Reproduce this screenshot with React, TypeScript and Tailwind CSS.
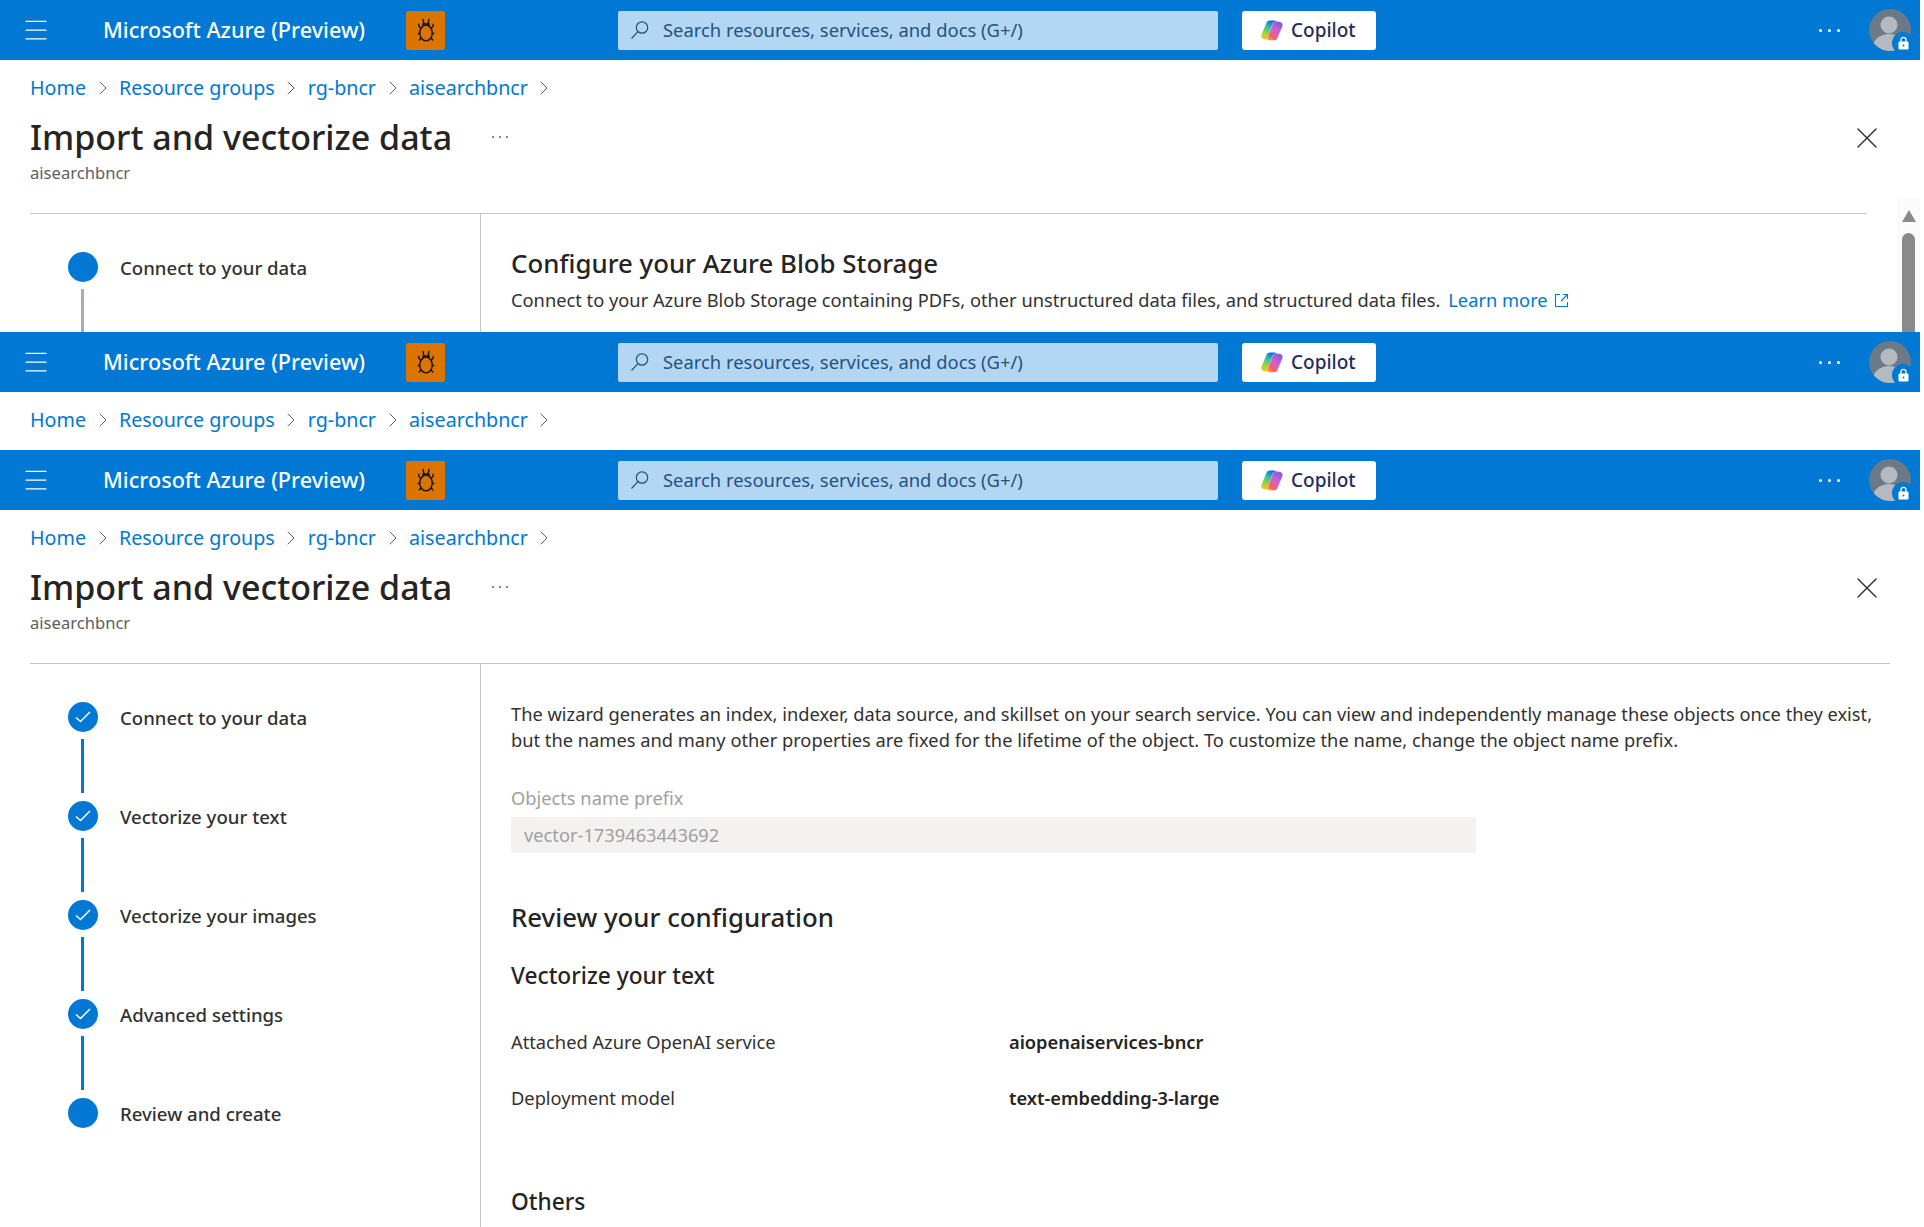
import React from 'react';
import { ChevronRight, X, Menu } from 'lucide-react';

const BREADCRUMBS = ['Home', 'Resource groups', 'rg-bncr', 'aisearchbncr'];

const BugIcon = () => (
  <svg width="22" height="24" viewBox="0 0 22 24" fill="none" stroke="#111" strokeWidth="1.3" strokeLinecap="round">
    <ellipse cx="11" cy="15" rx="6.300" ry="7.800" />
    <path d="M8 8.200V6h6v2.200" />
    <path d="M8 1.500l1 4.500M14 1.500L13 6" />
    <path d="M5.500 10L3.800 8V6.200M16.500 10l1.700-2V6.200M4.700 15.500H3.200M17.300 15.500h1.500M5.800 20L4.300 22M16.200 20l1.500 2" />
  </svg>
);

const SearchIcon = () => (
  <svg width="20" height="20" viewBox="0 0 20 20" fill="none" stroke="#24527f" strokeWidth="1.2">
    <circle cx="12" cy="7.500" r="5.700" />
    <path d="M8 11.700L1.500 18.500" />
  </svg>
);

const CopilotLogo = () => (
  <svg width="24" height="21" viewBox="0 0 24 21">
    <defs>
      <linearGradient id="copilotLeft" x1="0.7" y1="0" x2="0.2" y2="1">
        <stop offset="0" stopColor="#0f5fd8" />
        <stop offset="0.4" stopColor="#2fc4a8" />
        <stop offset="0.75" stopColor="#a8d62c" />
        <stop offset="1" stopColor="#f7c325" />
      </linearGradient>
      <linearGradient id="copilotRight" x1="0.8" y1="0" x2="0.2" y2="1">
        <stop offset="0" stopColor="#7a5be8" />
        <stop offset="0.5" stopColor="#d95fc8" />
        <stop offset="0.8" stopColor="#f5606a" />
        <stop offset="1" stopColor="#fb9a3c" />
      </linearGradient>
    </defs>
    <path d="M10 .5C8 .5 6.800 1.500 6.200 3.500L1.500 14.500C.5 17.500 2.500 19.500 5.500 19.500H9C10.500 19.500 11.500 18.500 12 17L17.500 2.500C17 1.200 16 .5 15 .5Z" fill="url(#copilotLeft)" />
    <path d="M14 20.500C16 20.500 17.200 19.500 17.800 17.500L22.500 6.500C23.500 3.500 21.500 1.500 18.500 1.500H15.500C14 1.500 13 2.500 12.500 4L7 18.500C7.500 19.800 8.500 20.500 9.500 20.500Z" fill="url(#copilotRight)" stroke="#ffffff" strokeOpacity="0.6" strokeWidth="0.6" />
  </svg>
);

const Avatar = () => (
  <div className="relative mr-[9px] h-[42px] w-[42px]">
    <svg width="42" height="42" viewBox="0 0 42 42">
      <defs>
        <clipPath id="avatarClip"><circle cx="21" cy="21" r="21" /></clipPath>
      </defs>
      <circle cx="21" cy="21" r="21" fill="#6c7a88" />
      <g clipPath="url(#avatarClip)" fill="#b4bac0">
        <circle cx="20" cy="16" r="8.500" />
        <ellipse cx="20" cy="38" rx="16" ry="13" />
      </g>
    </svg>
    <div className="absolute bottom-[-3px] right-[-3px] flex h-[22px] w-[22px] items-center justify-center rounded-full bg-[#0078d4]">
      <svg width="11" height="14" viewBox="0 0 11 14">
        <path d="M3 6V3.800a2.500 2.500 0 0 1 5 0V6" fill="none" stroke="#fff" strokeWidth="1.300" />
        <rect x="0.500" y="5.500" width="10" height="8" rx="1.200" fill="#fff" />
        <circle cx="5.500" cy="9.500" r="1" fill="#0078d4" />
      </svg>
    </div>
  </div>
);

const Dots = ({ className, dot }: { className: string; dot: string }) => (
  <div className={`flex items-center ${className}`}>
    <span className={`rounded-full bg-current ${dot}`} />
    <span className={`rounded-full bg-current ${dot}`} />
    <span className={`rounded-full bg-current ${dot}`} />
  </div>
);

const TopBar = () => (
  <header className="flex h-[60px] shrink-0 items-center bg-[#0078d4]">
    <div className="w-[103px] pl-[21px] text-white">
      <Menu size={30} strokeWidth={1} />
    </div>
    <div className="w-[303px] whitespace-nowrap pt-[1px] text-[21.600px] font-medium text-white">Microsoft Azure (Preview)</div>
    <div className="flex h-[39px] w-[39px] items-center justify-center rounded-[2px] bg-[#db7500]">
      <BugIcon />
    </div>
    <div className="ml-[173px] flex h-[39px] w-[600px] items-center rounded-[2px] bg-[#b3d6f2] pl-[12px] text-[18.400px] text-[#24527f]">
      <SearchIcon />
      <span className="ml-[13px] whitespace-nowrap">Search resources, services, and docs (G+/)</span>
    </div>
    <div className="ml-[24px] flex h-[39px] w-[134px] items-center rounded-[3px] bg-white pl-[18px] text-[19px] font-medium text-[#242e5c]">
      <CopilotLogo />
      <span className="ml-[7px]">Copilot</span>
    </div>
    <Dots className="ml-auto mr-[29px] gap-[6px] text-white" dot="h-[3px] w-[3px]" />
    <Avatar />
  </header>
);

const Breadcrumb = ({ height }: { height: string }) => (
  <nav className={`flex items-center pl-[30px] text-[19.700px] text-[#0078d4] ${height}`}>
    {BREADCRUMBS.map((crumb) => (
      <React.Fragment key={crumb}>
        <span className="whitespace-nowrap">{crumb}</span>
        <ChevronRight size={24} strokeWidth={1} className="mx-[4.500px] text-[#605e5c]" />
      </React.Fragment>
    ))}
  </nav>
);

const TitleBlock = () => (
  <div className="h-[97px] pl-[30px] pt-[1px]">
    <div className="flex h-[40px] items-center text-[#252423]">
      <h1 className="whitespace-nowrap text-[34px] font-medium">Import and vectorize data</h1>
      <Dots className="ml-[40px] gap-[5px] text-[#605e5c]" dot="h-[2px] w-[2px]" />
      <X size={36} strokeWidth={0.95} className="absolute right-[35px] mt-[2px] text-[#323130]" />
    </div>
    <div className="mt-[3px] h-[26px] text-[16.600px] leading-[26px] text-[#605e5c]">aisearchbncr</div>
  </div>
);

type Step = { label: string; done: boolean; line: 'blue' | 'grey' | null };

const Steps = ({ steps }: { steps: Step[] }) => (
  <div className="w-[451px] shrink-0 border-r border-[#c8c6c4] pl-[38px] pt-[38px]">
    {steps.map((step) => (
      <div key={step.label}>
        <div className="flex h-[30px] items-center">
          <div className="flex h-[30px] w-[30px] items-center justify-center rounded-full bg-[#0078d4]">
            {step.done && (
              <svg width="18" height="14" viewBox="0 0 18 14" fill="none" stroke="#fff" strokeWidth="1.500">
                <path d="M2 7.500l4.500 4L16 2" />
              </svg>
            )}
          </div>
          <span className="ml-[22px] whitespace-nowrap pt-[2px] text-[18.600px] font-medium text-[#323130]">{step.label}</span>
        </div>
        {step.line && (
          <div className={`ml-[13px] mb-[8px] mt-[7px] h-[54px] w-[3px] ${step.line === 'blue' ? 'bg-[#0078d4]' : 'bg-[#a6adb4]'}`} />
        )}
      </div>
    ))}
  </div>
);

const Scrollbar = () => (
  <div className="absolute right-0 top-[198px] flex h-[134px] w-[23px] flex-col items-center bg-[#fbfbfb]">
    <div className="mt-[12px] h-0 w-0 border-x-[7.500px] border-b-[12px] border-x-transparent border-b-[#8a8a8a]" />
    <div className="mt-[11px] h-[101px] w-[13px] rounded-t-[7px] bg-[#8a8a8a]" />
  </div>
);

const ConfigRow = ({ label, value, className }: { label: string; value: string; className: string }) => (
  <div className={`flex h-[26px] items-center text-[18.280px] text-[#323130] ${className}`}>
    <span className="w-[498px]">{label}</span>
    <span className="font-semibold text-[#252423]">{value}</span>
  </div>
);

export default function App() {
  return (
    <div className="h-[1227px] w-[1920px] overflow-hidden bg-white font-['Noto_Sans',sans-serif]">
      {/* First capture */}
      <section className="relative h-[332px] overflow-hidden">
        <TopBar />
        <Breadcrumb height="h-[56px]" />
        <TitleBlock />
        <div className="ml-[30px] mr-[53px] flex h-[200px] border-t border-[#c8c6c4]">
          <Steps steps={[{ label: 'Connect to your data', done: false, line: 'grey' }]} />
          <div className="pl-[30px] pt-[33px]">
            <h2 className="flex h-[34px] items-center whitespace-nowrap pb-[2px] text-[25.800px] font-medium text-[#252423]">Configure your Azure Blob Storage</h2>
            <p className="mt-[6px] flex h-[26px] items-center whitespace-nowrap text-[18.280px] text-[#323130]">
              Connect to your Azure Blob Storage containing PDFs, other unstructured data files, and structured data files.
              <span className="ml-[8px] text-[#0078d4]">Learn more</span>
              <svg width="15" height="15" viewBox="0 0 15 15" fill="none" stroke="#0078d4" strokeWidth="1.100" className="ml-[6px]">
                <path d="M6 1.500H1.500v12h12V9M9 1.500h4.500V6M13.500 1.500L7 8" />
              </svg>
            </p>
          </div>
        </div>
        <Scrollbar />
      </section>

      {/* Second capture */}
      <section className="h-[118px] overflow-hidden">
        <TopBar />
        <Breadcrumb height="h-[56px]" />
      </section>

      {/* Third capture */}
      <section className="relative">
        <TopBar />
        <Breadcrumb height="h-[56px]" />
        <TitleBlock />
        <div className="ml-[30px] mr-[30px] flex h-[600px] border-t border-[#c8c6c4]">
          <Steps
            steps={[
              { label: 'Connect to your data', done: true, line: 'blue' },
              { label: 'Vectorize your text', done: true, line: 'blue' },
              { label: 'Vectorize your images', done: true, line: 'blue' },
              { label: 'Advanced settings', done: true, line: 'blue' },
              { label: 'Review and create', done: false, line: null },
            ]}
          />
          <div className="pl-[30px] pt-[37px]">
            <p className="whitespace-nowrap text-[18.280px] leading-[26px] text-[#323130]">
              The wizard generates an index, indexer, data source, and skillset on your search service. You can view and independently manage these objects once they exist,
              <br />
              but the names and many other properties are fixed for the lifetime of the object. To customize the name, change the object name prefix.
            </p>
            <div className="mt-[32px] flex h-[26px] items-center text-[18.280px] text-[#a19f9d]">Objects name prefix</div>
            <div className="mt-[6px] flex h-[36px] w-[965px] items-center rounded-[2px] bg-[#f3f2f1] pl-[13px] text-[18.280px] text-[#a19f9d]">vector-1739463443692</div>
            <h2 className="mt-[48px] flex h-[34px] items-center pb-[2px] text-[25.800px] font-medium text-[#252423]">Review your configuration</h2>
            <h3 className="mt-[26px] flex h-[30px] items-center text-[22.700px] font-medium text-[#252423]">Vectorize your text</h3>
            <ConfigRow label="Attached Azure OpenAI service" value="aiopenaiservices-bncr" className="mt-[38px]" />
            <ConfigRow label="Deployment model" value="text-embedding-3-large" className="mt-[30px]" />
            <h3 className="mt-[76px] flex h-[30px] items-center text-[22.700px] font-medium text-[#252423]">Others</h3>
          </div>
        </div>
      </section>
    </div>
  );
}
